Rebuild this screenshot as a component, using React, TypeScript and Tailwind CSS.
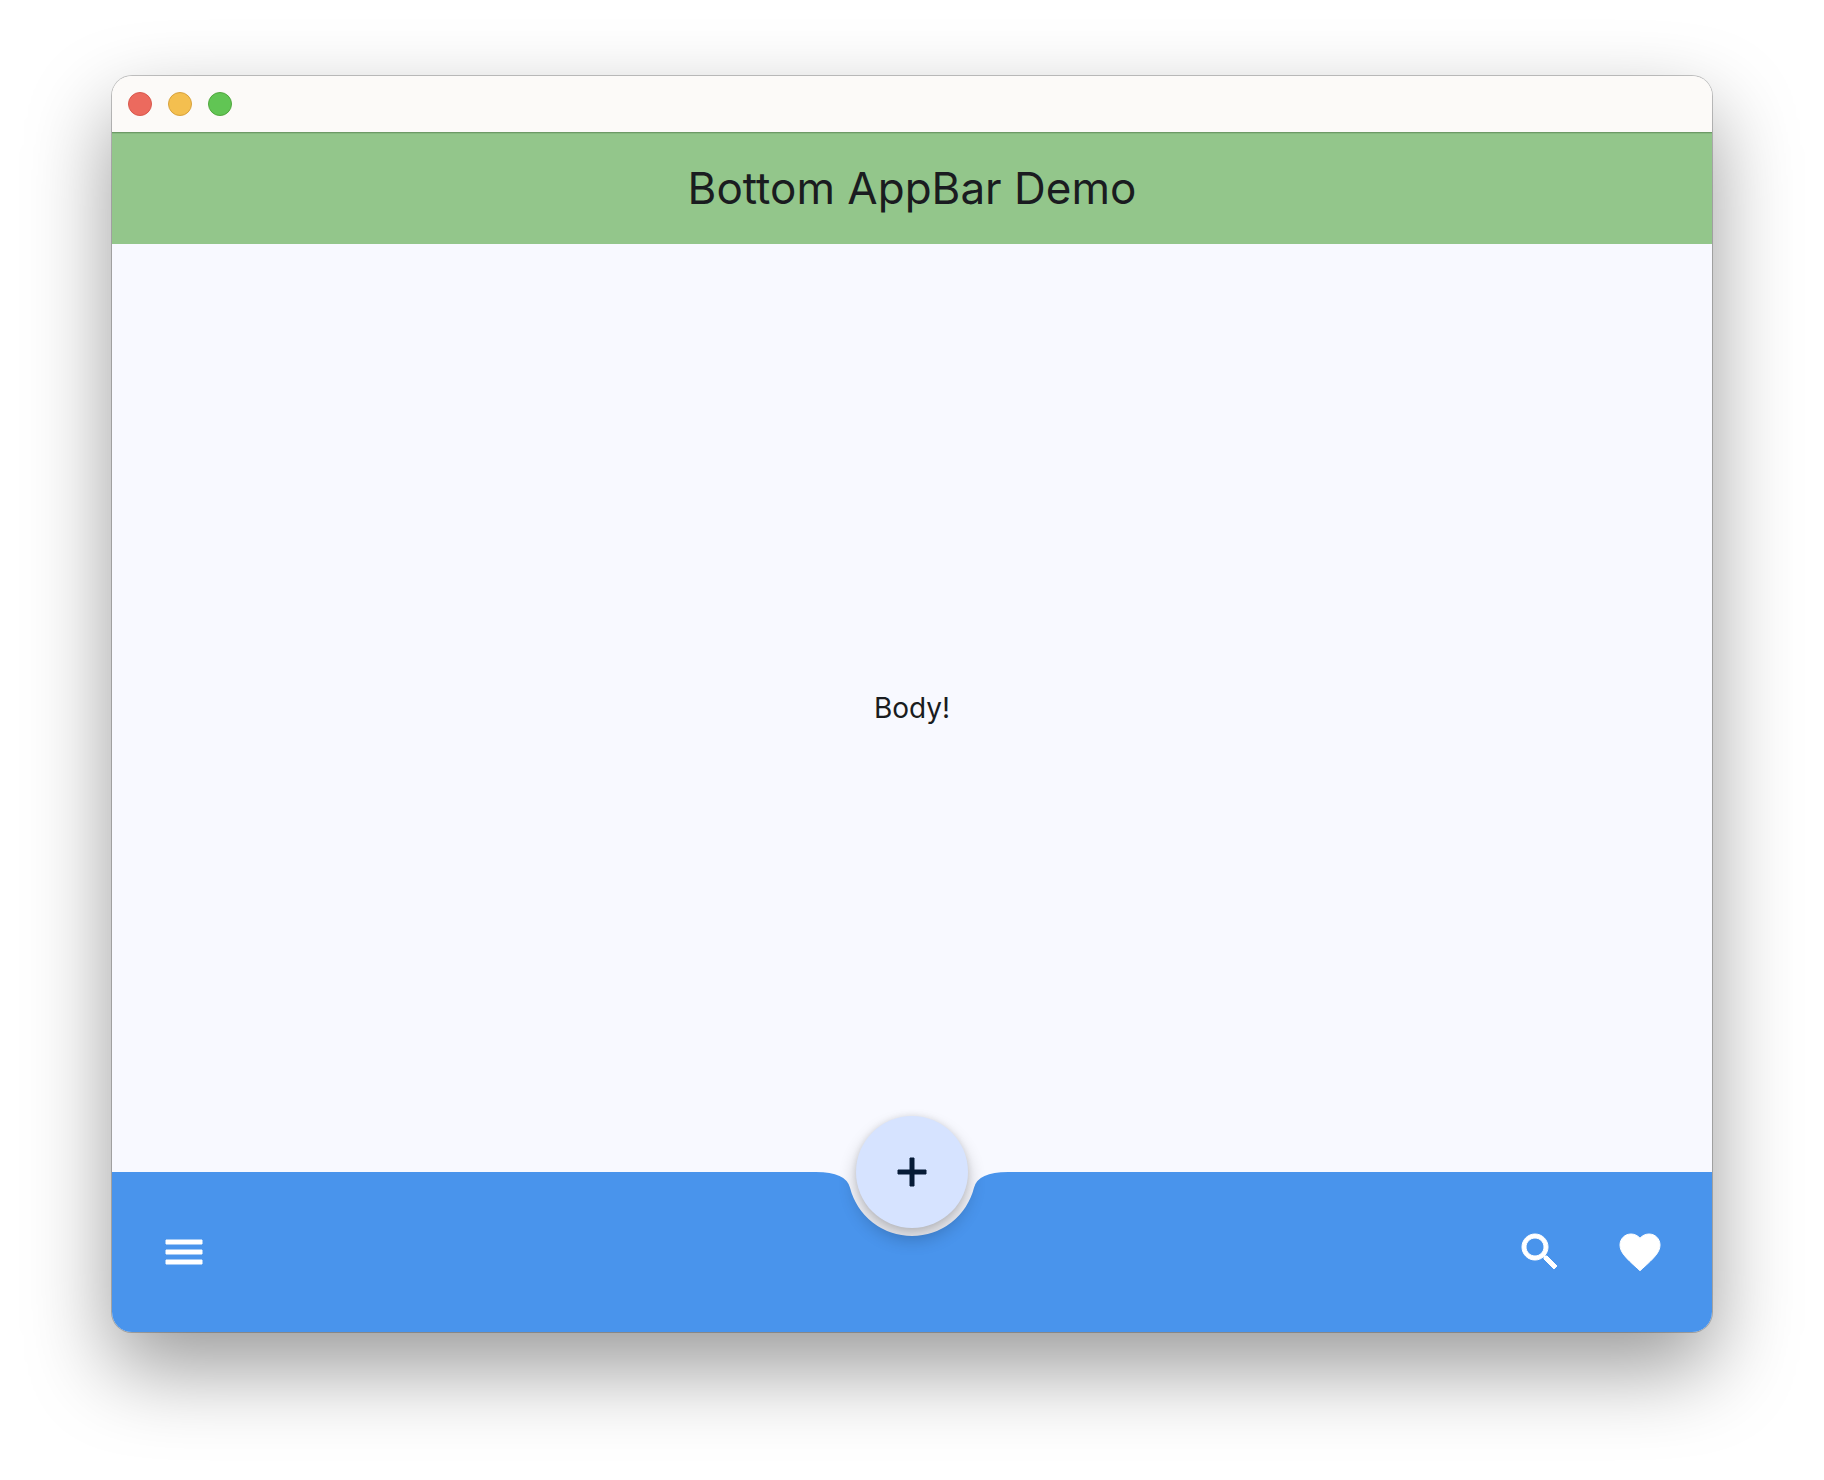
import type { ReactNode } from "react";

function TrafficLight({ label, tone }: { label: string; tone: string }) {
  return <button type="button" aria-label={label} className={`size-6 rounded-full border ${tone}`} />;
}

function Icon({ children }: { children: ReactNode }) {
  return (
    <svg viewBox="0 0 24 24" className="size-12 overflow-visible" fill="currentColor" stroke="currentColor" strokeWidth="0.5" aria-hidden="true">
      {children}
    </svg>
  );
}

function BarButton({ label, children }: { label: string; children: ReactNode }) {
  return (
    <button type="button" aria-label={label} className="flex size-20 items-center justify-center rounded-full text-white">
      <Icon>{children}</Icon>
    </button>
  );
}

export default function App() {
  return (
    <div className="flex min-h-screen bg-white px-28 pt-[76px] pb-[148px] font-['Inter',sans-serif] text-[#1a1c20]">
      <div className="flex flex-1 flex-col rounded-[20px] shadow-[0_0_0_1px_rgba(0,0,0,0.22),0_36px_84px_rgba(0,0,0,0.4)]">
        <div className="flex h-14 items-center gap-4 rounded-t-[20px] bg-[#fcfaf8] px-4">
          <TrafficLight label="Close" tone="border-[#d9584d] bg-[#ec6a5e]" />
          <TrafficLight label="Minimize" tone="border-[#d8a23d] bg-[#f4bf4f]" />
          <TrafficLight label="Zoom" tone="border-[#51a73e] bg-[#61c554]" />
        </div>
        <header className="flex h-28 justify-center border-t border-[#6d9a66] bg-[#93c68b] pt-6 shadow-[inset_0_1px_0_#86b87f]">
          <h1 className="text-[44px] leading-[62px]">Bottom AppBar Demo</h1>
        </header>
        <main className="flex flex-1 items-center justify-center bg-[#f8f9ff]">
          <p className="text-[28px] leading-10">Body!</p>
        </main>
        <footer className="relative flex h-40 items-center justify-between rounded-b-[20px] bg-[#4994ec] px-8">
          <BarButton label="Menu">
            <path d="M3 18h18v-2H3v2zm0-5h18v-2H3v2zm0-7v2h18V6H3z" />
          </BarButton>
          <div className="flex gap-5">
            <BarButton label="Search">
              <path d="M15.5 14h-.79l-.28-.27C15.41 12.59 16 11.11 16 9.5 16 5.91 13.09 3 9.5 3S3 5.91 3 9.5 5.91 16 9.5 16c1.61 0 3.09-.59 4.23-1.57l.27.28v.79l5 4.99L20.49 19l-4.99-5zm-6 0C7.01 14 5 11.99 5 9.5S7.01 5 9.5 5 14 7.01 14 9.5 11.99 14 9.5 14z" />
            </BarButton>
            <BarButton label="Favorite">
              <path d="M12 21.35l-1.45-1.32C5.4 15.36 2 12.28 2 8.5 2 5.42 4.42 3 7.5 3c1.74 0 3.41.81 4.5 2.09C13.09 3.81 14.76 3 16.5 3 19.58 3 22 5.42 22 8.5c0 3.78-3.4 6.86-8.55 11.54L12 21.35z" />
            </BarButton>
          </div>
          <div className="absolute inset-x-0 top-0 flex justify-center">
            <svg viewBox="0 0 192 64" className="h-16 w-48" aria-hidden="true">
              <path d="M0 0Q30 0 33.94 15.6A64 64 0 0 0 158.06 15.6Q162 0 192 0Z" fill="#f8f9ff" />
            </svg>
          </div>
          <div className="absolute inset-x-0 -top-14 flex justify-center">
            <button
              type="button"
              aria-label="Add"
              className="flex size-28 items-center justify-center rounded-full bg-[#d6e3ff] text-[#061b36] shadow-[0_10px_18px_rgba(0,0,0,0.24),0_0_6px_rgba(0,0,0,0.1)]"
            >
              <Icon>
                <path d="M19 13h-6v6h-2v-6H5v-2h6V5h2v6h6v2z" />
              </Icon>
            </button>
          </div>
        </footer>
      </div>
    </div>
  );
}
